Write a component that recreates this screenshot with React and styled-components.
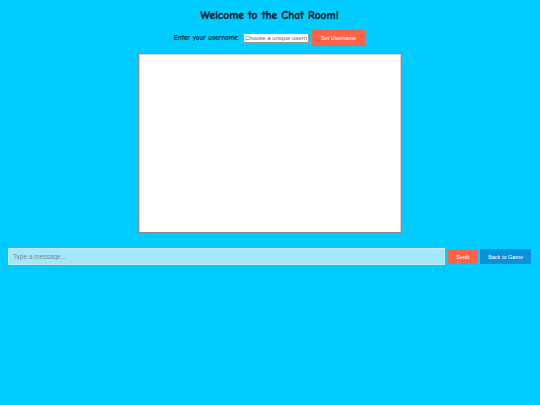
import React, { useState } from "react";
import styled, { createGlobalStyle } from "styled-components";

const GlobalStyle = createGlobalStyle`
  html, body {
    margin: 0;
    padding: 0;
    background: #00ccff;
  }
  body {
    margin: 8px 9px 8px 8px;
    font-family: "Liberation Sans", Arial, sans-serif;
  }
`;

const Page = styled.div`
  display: flex;
  flex-direction: column;
  align-items: center;
`;

const Title = styled.h1`
  margin: 0;
  font-family: "Comic Sans MS", "Comic Neue", cursive;
  font-size: 11.5px;
  line-height: 16px;
  font-weight: 800;
  color: #0b1a2a;
  -webkit-text-stroke: 0.3px #0b1a2a;
`;

const UsernameRow = styled.div`
  display: flex;
  align-items: center;
  gap: 3px;
  margin-top: 6px;
`;

const Label = styled.label`
  font-family: "Comic Sans MS", "Comic Neue", cursive;
  font-size: 7px;
  font-weight: bold;
  color: #0b1a2a;
  margin-right: 1px;
`;

const SmallInput = styled.input`
  width: 62px;
  height: 8px;
  padding: 0 1px;
  border: 1px solid #9a9a9a;
  font-family: "Liberation Sans", Arial, sans-serif;
  font-size: 6px;
  outline: none;
  &::placeholder {
    color: #666;
  }
`;

const Button = styled.button`
  height: 15px;
  padding: 0 ${(p) => p.$pad || 8}px;
  border: none;
  background: ${(p) => p.$bg};
  color: #fff;
  font-family: "Liberation Sans", Arial, sans-serif;
  font-size: 5.5px;
  cursor: pointer;
  box-shadow: ${(p) => (p.$shadow ? "0 1px 0 #8a8a8a" : "none")};
`;

const ChatBox = styled.div`
  margin-top: 8px;
  width: 262px;
  height: 178px;
  background: #fff;
  border: 1px solid #8a8a8a;
  box-shadow: inset 1px 0 0 #f3c9c9, inset -1px 0 0 #f3c9c9, inset 0 1px 0 #f3c9c9;
`;

const MessageRow = styled.div`
  align-self: stretch;
  display: flex;
  align-items: center;
  gap: 3px;
  margin-top: 15px;
`;

const MessageInput = styled.input`
  flex: 1;
  height: 17px;
  box-sizing: border-box;
  padding: 0 4px;
  border: 1px solid #c3eefc;
  background: #a6e8fb;
  font-family: "Liberation Sans", Arial, sans-serif;
  font-size: 6.5px;
  outline: none;
  &::placeholder {
    color: #6f8a96;
  }
`;

export default function App() {
  const [name, setName] = useState("");
  const [msg, setMsg] = useState("");

  return (
    <>
      <GlobalStyle />
      <Page>
        <Title>Welcome to the Chat Room!</Title>
        <UsernameRow>
          <Label>Enter your username:</Label>
          <SmallInput
            placeholder="Choose a unique username"
            value={name}
            onChange={(e) => setName(e.target.value)}
          />
          <Button $bg="#ff6347" $pad={9} $shadow>
            Set Username
          </Button>
        </UsernameRow>
        <ChatBox />
        <MessageRow>
          <MessageInput
            placeholder="Type a message..."
            value={msg}
            onChange={(e) => setMsg(e.target.value)}
          />
          <Button $bg="#ff6347" $pad={8}>
            Send
          </Button>
          <Button $bg="#0a92d8" $pad={8}>
            Back to Game
          </Button>
        </MessageRow>
      </Page>
    </>
  );
}
